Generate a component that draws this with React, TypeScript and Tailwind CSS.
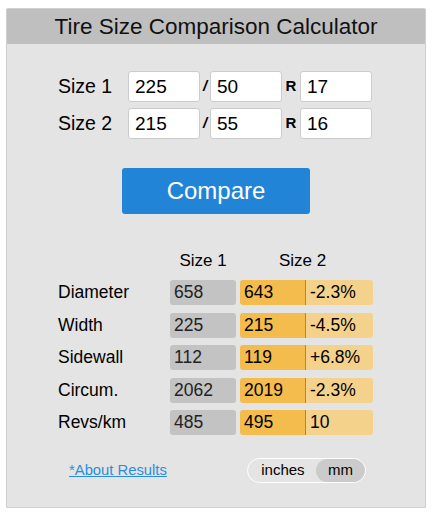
import React from 'react';

const rows = [
  { label: 'Diameter', a: '658', b: '643', diff: '-2.3%' },
  { label: 'Width', a: '225', b: '215', diff: '-4.5%' },
  { label: 'Sidewall', a: '112', b: '119', diff: '+6.8%' },
  { label: 'Circum.', a: '2062', b: '2019', diff: '-2.3%' },
  { label: 'Revs/km', a: '485', b: '495', diff: '10' },
];

function SizeInput({ value }: { value: string }) {
  return (
    <input
      defaultValue={value}
      className="w-[72px] h-[31px] rounded-[3px] border border-[#cccccc] bg-white pl-[6px] text-[19px] text-black outline-none"
    />
  );
}

function SizeRow({ label, w, p, r }: { label: string, w: string, p: string, r: string }) {
  return (
    <div className="flex items-center h-[31px]">
      <span className="w-[70px] text-[19.5px]">{label}</span>
      <SizeInput value={w} />
      <span className="w-[10px] text-center text-[15px] font-bold italic">/</span>
      <SizeInput value={p} />
      <span className="w-[18px] text-center text-[15px] font-bold">R</span>
      <SizeInput value={r} />
    </div>
  );
}

export default function App() {
  return (
    <div className="pt-[8px] px-[6px] text-black" style={{ fontFamily: '"Liberation Sans", Arial, sans-serif' }}>
      <div className="w-[420px] border border-[#d0d0d0] bg-[#e4e4e4] rounded-[2px] shadow-[0_1px_1px_rgba(0,0,0,0.12)]">
        <div className="h-[35px] bg-[#bfbfbf] flex items-center justify-center text-[22.5px] text-[#111]">
          Tire Size Comparison Calculator
        </div>

        <div className="pl-[51px] pt-[27px] flex flex-col gap-[6px]">
          <SizeRow label="Size 1" w="225" p="50" r="17" />
          <SizeRow label="Size 2" w="215" p="55" r="16" />
        </div>

        <div className="flex justify-center mt-[29px]">
          <button className="w-[188px] h-[46px] rounded-[3px] bg-[#2184d6] text-white text-[24px]">
            Compare
          </button>
        </div>

        <div className="pl-[51px] mt-[37px]">
          <div className="flex h-[20px] items-center text-[17px]">
            <span className="w-[112px]" />
            <span className="w-[66px] text-center">Size 1</span>
            <span className="ml-[43px]">Size 2</span>
          </div>
          <div className="flex flex-col gap-[7.5px] mt-[9px]">
            {rows.map((row) => (
              <div key={row.label} className="flex items-center h-[25px] text-[17.5px]">
                <span className="w-[112px]">{row.label}</span>
                <span className="w-[66px] h-full flex items-center pl-[4px] rounded-[3px] bg-[#c3c3c3] text-[#222]">{row.a}</span>
                <div className="ml-[4px] flex h-full rounded-[3px] overflow-hidden">
                  <span className="w-[66px] flex items-center pl-[4px] bg-[#f3bc4c] border-r border-[#8a8a8a]">{row.b}</span>
                  <span className="w-[67px] flex items-center pl-[4px] bg-[#f4d28b]">{row.diff}</span>
                </div>
              </div>
            ))}
          </div>
        </div>

        <div className="flex items-center mt-[23px] pb-[24px]">
          <a href="#" className="ml-[62px] text-[14.8px] text-[#2a8ee0] underline">*About Results</a>
          <div className="ml-[80px] flex h-[25px] w-[119px] rounded-full border border-white overflow-hidden text-[15px]">
            <span className="flex-1 flex items-center justify-center pl-[2px]">inches</span>
            <span className="w-[49px] flex items-center justify-center rounded-full bg-[#cbcbcb]">mm</span>
          </div>
        </div>
      </div>
    </div>
  );
}
